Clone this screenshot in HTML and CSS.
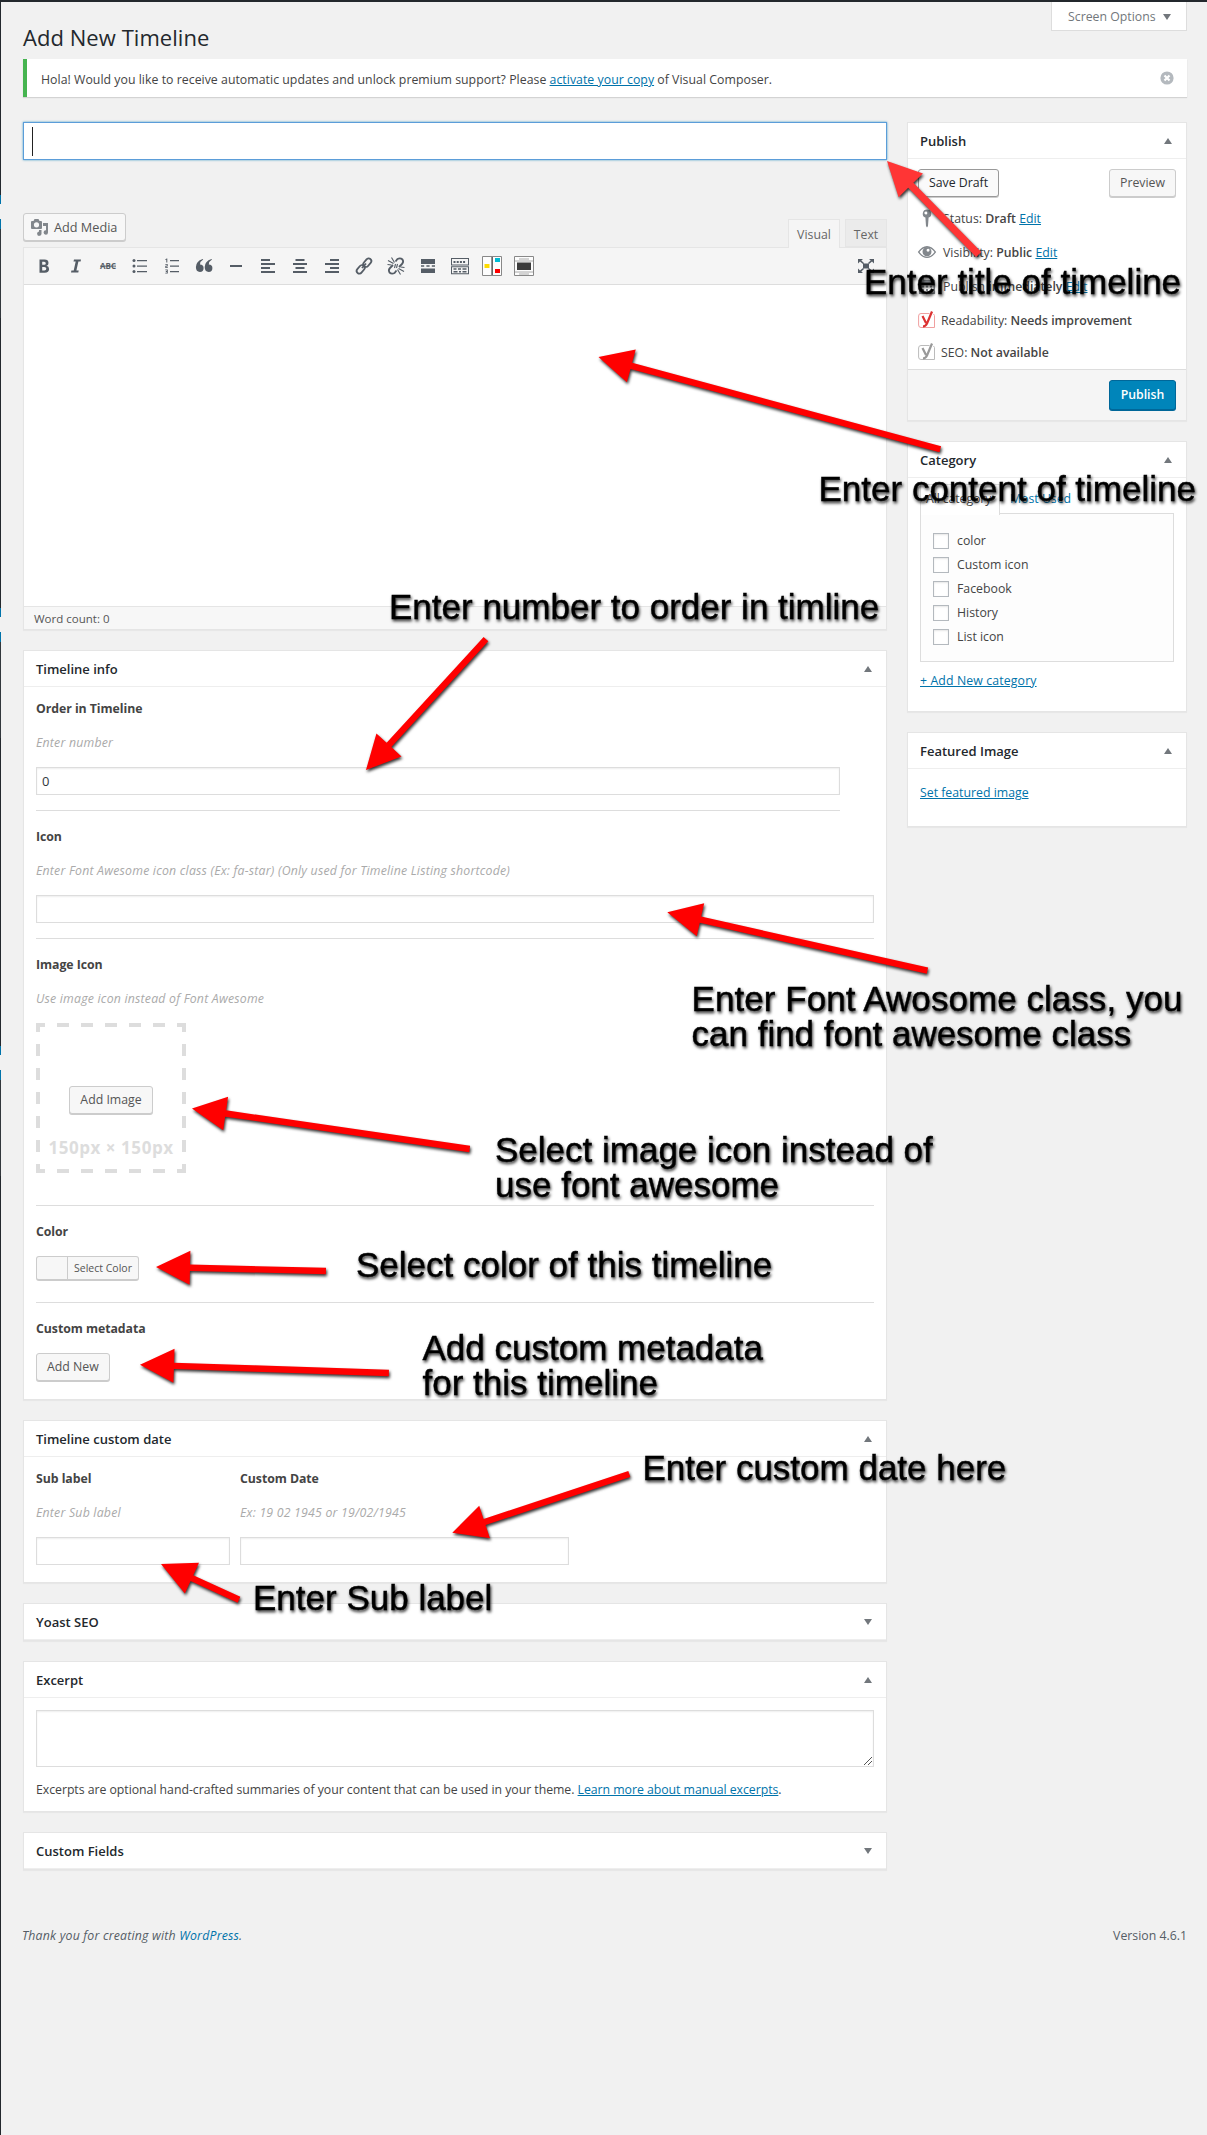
FILE: index.html
```html
<!DOCTYPE html>
<html lang="en">
<head>
<meta charset="utf-8">
<title>Add New Timeline</title>
<link rel="stylesheet" href="styles.css">
</head>
<body>
<div class="page">
  <header class="top">
    <h1>Add New Timeline</h1>
    <button class="screen-options">Screen Options <span class="tri down"></span></button>
  </header>

  <div class="notice">
    <p>Hola! Would you like to receive automatic updates and unlock premium support? Please <a href="#">activate your copy</a> of Visual Composer.</p>
    <svg class="dismiss" viewBox="0 0 14 14"><circle cx="7" cy="7" r="6.6" fill="#b4b9be"/><path d="M4.5 4.5l5 5M9.500 4.500l-5 5" stroke="#fff" stroke-width="2.200"/></svg>
  </div>

  <div class="columns">
    <main class="main">
      <div class="title-input"><i class="caret"></i></div>

      <div class="editor-tools">
        <button class="btn media">
          <svg viewBox="0 0 18 18" width="18" height="18" fill="#82878c"><path fill-rule="evenodd" d="M1 3h1.500L3.500 1h4l1 2H10q1 0 1 1v6q0 1-1 1H1q-1 0-1-1V4q0-1 1-1zm4.500 1.200a2.600 2.600 0 1 0 0 5.200 2.600 2.600 0 0 0 0-5.200z"/><path d="M12 5h5v9.500a2.200 2.200 0 1 1-2-2.200V8h-3zM8 12h2.500v3.500A2.200 2.200 0 1 1 8 13.500z"/></svg>
          <span>Add Media</span>
        </button>
        <div class="tabs"><span class="tab active">Visual</span><span class="tab">Text</span></div>
      </div>

      <section class="editor">
        <div class="toolbar">
          <svg viewBox="0 0 20 20"><path fill-rule="evenodd" d="M5.500 3.500h5q4 0 4 3.400 0 2.300-2 2.900 2.600.6 2.600 3.200 0 3.700-4.400 3.700H5.500zM8.200 5.700v3.100h2q1.600 0 1.600-1.600 0-1.500-1.700-1.500zm0 5.200v3.600h2.200q1.900 0 1.900-1.900 0-1.700-2-1.700z"/></svg>
          <svg viewBox="0 0 20 20"><path d="M8 3.500h7l-.4 2h-2.200l-2 9h2.300l-.4 2H5l.4-2h2.300l2-9H7.500z"/></svg>
          <svg viewBox="0 0 20 20"><text class="abc" x="2" y="13">ABC</text><path d="M2 9.600h16v1H2z"/></svg>
          <svg viewBox="0 0 20 20"><circle cx="4" cy="4.500" r="1.500"/><circle cx="4" cy="10" r="1.500"/><circle cx="4" cy="15.500" r="1.500"/><path d="M7 4h10v1.300H7zM7 9.400h10v1.300H7zM7 15h10v1.300H7z"/></svg>
          <svg viewBox="0 0 20 20"><path d="M8 4h9v1.300H8zM8 9.400h9v1.300H8zM8 15h9v1.300H8zM4.300 2.500h1v4h-1zM3.300 3.200h1v.8h-1zM3.300 8h2.400v2.400H4.300v.9h1.600v.8H3.300V9.700h1.500v-.9H3.300zM3.300 13.500h2.500v4H3.300v-.8h1.500v-.8h-1v-.8h1v-.8H3.300z"/></svg>
          <svg viewBox="0 0 20 20"><path d="M9.200 3.500Q6.300 5 6 8.600q3.600.2 3.600 3.500 0 3.900-3.700 3.900-4 0-4-4.900 0-5.800 6.800-8.100zM18 3.500q-2.900 1.500-3.200 5.100 3.600.2 3.600 3.500 0 3.900-3.700 3.900-4 0-4-4.900 0-5.800 6.800-8.100z"/></svg>
          <svg viewBox="0 0 20 20"><path d="M4 9h12v2H4z"/></svg>
          <svg viewBox="0 0 20 20"><path d="M3 3h9v2H3zM3 7h14v2H3zM3 11h9v2H3zM3 15h14v2H3z"/></svg>
          <svg viewBox="0 0 20 20"><path d="M5.500 3h9v2h-9zM3 7h14v2H3zM5.500 11h9v2h-9zM3 15h14v2H3z"/></svg>
          <svg viewBox="0 0 20 20"><path d="M8 3h9v2H8zM3 7h14v2H3zM8 11h9v2H8zM3 15h14v2H3z"/></svg>
          <svg viewBox="0 0 20 20" class="stroke"><rect x="-4.300" y="-2.700" width="9.500" height="5.400" rx="2.700" transform="translate(13 7) rotate(-50)"/><rect x="-5.200" y="-2.700" width="9.500" height="5.400" rx="2.700" transform="translate(7 13) rotate(-50)"/><path d="M8 12l4-4.500"/></svg>
          <svg viewBox="0 0 20 20" class="stroke"><path d="M9.500 5.500l2-2.500q2.800-1.500 5 .5 1.500 2.500-.5 4.500l-3 3M10.500 14.500l-2 2.500q-2.800 1.500-5-.5-1.500-2.500.5-4.500l3-3"/><path class="fine" d="M2 4.500l5.500 3M5.500 1.500l3 5M9.500 8l-1 4M1.500 8.500l4 .5M18 15.500l-5.500-3M14.500 18.500l-3-5M10.500 12l1-4M18.500 11.500l-4-.5"/></svg>
          <svg viewBox="0 0 20 20"><path d="M3 3h14v5H3zM3 9.300h3.200v1.500H3zM8.400 9.300h3.200v1.500H8.400zM13.800 9.300H17v1.500h-3.200zM3 12.500h14V17H3z"/></svg>
          <svg viewBox="0 0 20 20"><path fill-rule="evenodd" d="M1 2h18v7.500H1zm1 1v5.500h16V3zM1 10.300h18v8H1zm1 1v6h16v-6z"/><path d="M3.500 5h2v2h-2zM6.700 5h2v2h-2zM9.900 5h2v2h-2zM13.100 5h2v2h-2zM3.500 12.300h3v1.500h-3zM8 12.300h3v1.500H8zM12.500 12.300h4v1.500h-4zM3.500 15h4v1.500h-4zM9 15h2v1.500H9zM12.500 15h4v1.500h-4z"/></svg>
          <svg viewBox="0 0 20 20"><path d="M.5.500h19v19H.500z" fill="#fdfdfd" stroke="#888"/><path d="M9.300 1h1.700v18H9.300z" fill="#666"/><path d="M2.500 8h5v4h-5z" fill="#ffdc00"/><path d="M13 2h5v4h-5z" fill="#00bcd4"/><path d="M13 13h5v4h-5z" fill="#f00"/></svg>
          <svg viewBox="0 0 20 20"><path d="M.5.500h19v19H.500z" fill="#fdfdfd" stroke="#888"/><path d="M3 6.500h14v7.500H3z" fill="#3c3c3c"/><path d="M1 5h18M1 16h18M5 3h10M5 18h10" stroke="#aaa"/></svg>
          <svg viewBox="0 0 20 20" class="expand"><path d="M7 7.500h6v5H7zM2 3h5L5.300 4.500 8 7 7 8 4 5.500 2 7.500zM18 3h-5l1.700 1.500L12 7l1 1 3-2.500 2 2zM2 17h5l-1.700-1.500L8 13l-1-1-3 2.500-2-2zM18 17h-5l1.700-1.500L12 13l1-1 3 2.500 2-2z"/></svg>
        </div>
        <div class="canvas"></div>
        <div class="status">Word count: 0</div>
      </section>

      <section class="box">
        <h2>Timeline info <span class="tri up"></span></h2>
        <div class="body">
          <div class="field narrow"><b>Order in Timeline</b><em>Enter number</em><div class="input">0</div></div>
          <div class="field"><b>Icon</b><em>Enter Font Awesome icon class (Ex: fa-star) (Only used for Timeline Listing shortcode)</em><div class="input"></div></div>
          <div class="field image"><b>Image Icon</b><em>Use image icon instead of Font Awesome</em>
            <div class="drop">
              <svg class="dashes" viewBox="0 0 150 150"><path d="M0 0h9v4H4v5H0zM141 0h9v9h-4V4h-5zM0 141h4v5h5v4H0zM146 141h4v9h-9v-4h5z"/><path d="M21 2h112M21 148h112M2 21v112M148 21v112"/></svg>
              <button class="btn">Add Image</button><strong>150px × 150px</strong>
            </div>
          </div>
          <div class="field color"><b>Color</b><button class="picker"><i></i><span>Select Color</span></button></div>
          <div class="field last"><b>Custom metadata</b><button class="btn">Add New</button></div>
        </div>
      </section>

      <section class="box">
        <h2>Timeline custom date <span class="tri up"></span></h2>
        <div class="body dates">
          <div class="field sub"><b>Sub label</b><em>Enter Sub label</em><div class="input"></div></div>
          <div class="field date"><b>Custom Date</b><em>Ex: 19 02 1945 or 19/02/1945</em><div class="input"></div></div>
        </div>
      </section>

      <section class="box"><h2>Yoast SEO <span class="tri down"></span></h2></section>

      <section class="box">
        <h2>Excerpt <span class="tri up"></span></h2>
        <div class="body excerpt">
          <div class="textarea"><svg viewBox="0 0 8 8"><path d="M0 8L8 0M4 8l4-4" stroke="#555" stroke-width="1"/></svg></div>
          <p>Excerpts are optional hand-crafted summaries of your content that can be used in your theme. <a href="#">Learn more about manual excerpts</a>.</p>
        </div>
      </section>

      <section class="box"><h2>Custom Fields <span class="tri down"></span></h2></section>
    </main>

    <aside class="side">
      <section class="box publish">
        <h2>Publish <span class="tri up"></span></h2>
        <div class="draft"><button class="btn focus">Save Draft</button><button class="btn">Preview</button></div>
        <ul class="meta">
          <li><svg viewBox="0 0 20 20"><path fill-rule="evenodd" d="M10 1.500a4.200 4.200 0 0 1 1.600 8.100L11 18l-1 1.500L9 18l-.6-8.400A4.200 4.200 0 0 1 10 1.500zm-1.200 2a1.500 1.500 0 1 0 .1 3 1.500 1.500 0 0 0-.1-3z"/></svg><span>Status: <b>Draft</b> <a href="#">Edit</a></span></li>
          <li><svg viewBox="0 0 20 20"><path fill-rule="evenodd" d="M.8 10Q5 4 10 4t9.200 6Q15 16 10 16T.8 10zm1.700 0Q5.500 14.800 10 14.800T17.500 10Q14 5.800 10 5.800T2.500 10z"/><path fill-rule="evenodd" d="M10 5.200a4.500 4.500 0 1 1 0 9 4.500 4.500 0 0 1 0-9zm1 1.600a1.500 1.500 0 1 0 .1 3 1.500 1.500 0 0 0-.1-3z"/></svg><span>Visibility: <b>Public</b> <a href="#">Edit</a></span></li>
          <li><svg viewBox="0 0 20 20"><path fill-rule="evenodd" d="M2 4h3V2h2v2h6V2h2v2h3v14H2zm1.500 4v8.500h13V8z"/><path d="M5 9.500h2v2H5zM9 9.500h2v2H9zM13 9.500h2v2h-2zM5 13h2v2H5zM9 13h2v2H9z"/></svg><span>Publish <b>immediately</b> <a href="#">Edit</a></span></li>
          <li class="yoast bad"><svg viewBox="0 0 18 18"><path class="frame" d="M11.500 2.500H3Q.6 2.500.6 5v9q0 2.500 2.400 2.500h13.500v-12l-1-1.500"/><path class="y" d="M4.500 5l3.500 7M14 .5L9 12.500Q7.500 15.500 5 15.300"/></svg><span>Readability: <b>Needs improvement</b></span></li>
          <li class="yoast"><svg viewBox="0 0 18 18"><path class="frame" d="M11.500 2.500H3Q.6 2.500.6 5v9q0 2.500 2.400 2.500h13.500v-12l-1-1.500"/><path class="y" d="M4.500 5l3.500 7M14 .5L9 12.500Q7.500 15.500 5 15.300"/></svg><span>SEO: <b>Not available</b></span></li>
        </ul>
        <div class="actions"><button class="btn primary">Publish</button></div>
      </section>

      <section class="box category">
        <h2>Category <span class="tri up"></span></h2>
        <div class="cat-tabs"><span class="on">All category</span><a href="#">Most Used</a></div>
        <ul class="checks">
          <li><i></i>color</li><li><i></i>Custom icon</li><li><i></i>Facebook</li><li><i></i>History</li><li><i></i>List icon</li>
        </ul>
        <a class="add" href="#">+ Add New category</a>
      </section>

      <section class="box featured">
        <h2>Featured Image <span class="tri up"></span></h2>
        <a href="#">Set featured image</a>
      </section>
    </aside>
  </div>

  <footer><em>Thank you for creating with <a href="#">WordPress</a>.</em><span>Version 4.6.1</span></footer>
</div>

<svg class="notes" viewBox="0 0 1207 2135" width="1207" height="2135">
  <g fill="#f00">
    <path fill="#ff3535" transform="translate(887 161) rotate(45.600)" d="M0 0L34-17V-3.600H131V3.600H34V17z"/>
    <path transform="translate(598.500 357) rotate(15.100)" d="M0 0L34-17V-3.200H354V3.200H34V17z"/>
    <path transform="translate(366 770) rotate(-47.500)" d="M0 0L34-17V-3.200H177.600V3.200H34V17z"/>
    <path transform="translate(667.300 912.300) rotate(12.650)" d="M0 0L34-17V-3.200H266.600V3.200H34V17z"/>
    <path transform="translate(192 1108.600) rotate(8.270)" d="M0 0L34-17V-3.200H280.600V3.200H34V17z"/>
    <path transform="translate(156 1267) rotate(1.350)" d="M0 0L34-17V-3.200H170V3.200H34V17z"/>
    <path transform="translate(140 1364.700) rotate(1.900)" d="M0 0L34-17V-3.200H249V3.200H34V17z"/>
    <path transform="translate(452.300 1532.700) rotate(-18.350)" d="M0 0L34-17V-3.200H186.500V3.200H34V17z"/>
    <path transform="translate(161 1564) rotate(24.600)" d="M0 0L34-17V-3.200H85.800V3.200H34V17z"/>
  </g>
  <g class="note-text">
    <text x="864" y="294">Enter title of timeline</text>
    <text x="818.500" y="501">Enter content of timeline</text>
    <text x="389" y="619">Enter number to order in timline</text>
    <text x="691.500" y="1011" textLength="491">Enter Font Awosome class, you</text>
    <text x="691.500" y="1046">can find font awesome class</text>
    <text x="495" y="1162">Select image icon instead of</text>
    <text x="495" y="1197">use font awesome</text>
    <text x="356" y="1277">Select color of this timeline</text>
    <text x="422.500" y="1360">Add custom metadata</text>
    <text x="422.500" y="1395">for this timeline</text>
    <text x="642.500" y="1480">Enter custom date here</text>
    <text x="253" y="1610">Enter Sub label</text>
  </g>
</svg>
</body>
</html>
```
FILE: styles.css
```css
* { box-sizing: border-box; }
body {
  margin: 0;
  position: relative;
  background: #f1f1f1;
  color: #444;
  font: 12.3px/18px "Open Sans", "Noto Sans", sans-serif;
}
h1, h2, p, ul { margin: 0; padding: 0; font-weight: 400; list-style: none; }
a { color: #0073aa; }
button { font: inherit; color: #555; margin: 0; }

.page {
  height: 2135px;
  padding: 0 20px 0 22px;
  border-top: 2px solid #23282d;
  border-left: 1px solid;
  border-image: linear-gradient(#23282d 195px, #0073aa 195px 204px, #f1f1f1 204px 219px, #0073aa 219px 229px, #32373c 229px 318px, #23282d 318px 608px, #0073aa 608px 617px, #f1f1f1 617px 632px, #0073aa 632px 642px, #32373c 642px 738px, #23282d 738px 1046px, #0073aa 1046px 1055px, #f1f1f1 1055px 1070px, #0073aa 1070px 1080px, #32373c 1080px 1176px, #23282d 1176px) 2 0 0 1;
}

.tri { width: 0; height: 0; border: 4px solid transparent; flex: none; }
.tri.up { border-bottom: 6px solid #72777c; border-top: 0; }
.tri.down { border-top: 6px solid #72777c; border-bottom: 0; }

.top { display: flex; justify-content: space-between; height: 57px; }
h1 { font-size: 22px; line-height: 30px; padding-top: 20px; color: #23282d; letter-spacing: .05px; }
.screen-options {
  width: 136px; height: 29px; padding: 1px 16px 0; display: flex; align-items: center; gap: 7px;
  background: #fff; border: 1px solid #ddd; border-top: 0; color: #72777c; white-space: nowrap;
}

.notice {
  height: 38px; padding: 2px 13px 0 14px; display: flex; align-items: center; justify-content: space-between;
  background: #fff; border-left: 4px solid #46b450; box-shadow: 0 1px 1px rgba(0,0,0,.12);
  letter-spacing: .03px;
}
.notice p { padding-top: 2px; }
.dismiss { width: 14px; height: 14px; margin-top: -2px; }

.columns { display: flex; justify-content: space-between; margin-top: 25px; height: 1749px; }
.main { width: 864px; }
.side { width: 280px; }

.title-input {
  height: 38px; padding: 4px 8px; background: #fff;
  border: 1px solid #5b9dd9; box-shadow: 0 0 2px rgba(30,140,190,.8);
}
.caret { display: block; width: 1px; height: 29px; background: #222; }

.btn {
  height: 28px; padding: 0 10px; background: #f7f7f7; white-space: nowrap;
  border: 1px solid #ccc; border-radius: 3px; box-shadow: 0 1px 0 #ccc; line-height: 26px;
}
.btn.focus { border-color: #999; color: #23282d; background: #fafafa; }
.btn.primary {
  width: 67px; height: 30px; background: #0085ba; color: #fff; font-weight: 600;
  border-color: #006799; box-shadow: 0 1px 0 #006799; padding: 0;
}

.editor-tools { display: flex; justify-content: space-between; align-items: flex-end; height: 87px; }
.media { width: 103px; margin-bottom: 6px; padding: 0 7px; display: flex; align-items: center; gap: 5px; font-size: 12.700px; }
.tabs { display: flex; gap: 5px; margin-bottom: -1px; }
.tab {
  height: 28px; width: 42px; line-height: 29px; text-align: center;
  background: #ebebeb; border: 1px solid #e5e5e5; color: #666;
}
.tab.active { width: 52px; height: 29px; background: #f5f5f5; border-bottom: 0; }

.editor { border: 1px solid #e5e5e5; box-shadow: 0 1px 1px rgba(0,0,0,.04); height: 383px; margin-bottom: 20px; }
.toolbar {
  height: 37px; padding-left: 10px; display: flex; align-items: center; gap: 12px;
  background: #f5f5f5; border-bottom: 1px solid #ddd; fill: #555d66;
}
.toolbar svg { width: 20px; height: 20px; flex: none; }
.toolbar .expand { margin-left: auto; margin-right: 10px; }
.stroke { fill: none; stroke: #555d66; stroke-width: 1.8; }
.stroke .fine { stroke-width: 1.1; }
.abc { font: 700 8px "Open Sans", sans-serif; }
.canvas { height: 321px; background: #fff; }
.status { height: 23px; padding-left: 10px; background: #f7f7f7; border-top: 1px solid #e5e5e5; font-size: 11.5px; line-height: 23px; color: #555; }

.box { background: #fff; border: 1px solid #e5e5e5; box-shadow: 0 1px 1px rgba(0,0,0,.04); margin-bottom: 20px; }
.box h2 {
  height: 36px; padding: 1px 14px 0 12px; display: flex; align-items: center; justify-content: space-between;
  font-size: 13px; font-weight: 600; color: #23282d; border-bottom: 1px solid #eee;
}

.body { padding: 0 12px; }
.field { padding: 16px 0 15px; border-bottom: 1px solid #ddd; display: flex; flex-direction: column; align-items: flex-start; gap: 16px; }
.field:first-child, .dates .field { padding-top: 12px; }
.field b, .field em { height: 18px; line-height: 20px; }
.field b { font-weight: 700; letter-spacing: -.05px; }
.field em { color: #aaa; letter-spacing: .21px; }
.narrow { width: 804px; }
.input { width: 100%; height: 28px; padding: 0 5px; border: 1px solid #ddd; background: #fff; box-shadow: inset 0 1px 2px rgba(0,0,0,.07); line-height: 27px; font-size: 13px; color: #32373c; }
.image { padding-bottom: 32px; }
.drop { width: 150px; height: 150px; padding-top: 63px; display: flex; flex-direction: column; align-items: center; position: relative; }
.dashes { position: absolute; inset: 0; fill: #ddd; stroke: #ddd; stroke-width: 0; }
.dashes path + path { fill: none; stroke-width: 4; stroke-dasharray: 12 12; }
.drop strong { margin-top: 21px; font-size: 17px; line-height: 26px; letter-spacing: .55px; color: #ddd; white-space: nowrap; }
.color { padding-bottom: 21px; }
.picker { display: flex; width: 103px; height: 25px; padding: 0; border: 1px solid #ccc; border-bottom-width: 2px; border-radius: 3px; background: #f7f7f7; font-size: 10.500px; line-height: 22px; }
.picker i { width: 31px; border-right: 1px solid #ccc; }
.picker span { flex: 1; text-align: center; white-space: nowrap; }
.last { border: 0; padding-bottom: 18px; }

.dates { display: flex; gap: 10px; }
.dates .field { border: 0; padding-bottom: 17px; }
.sub { width: 194px; }
.date { width: 329px; }
.excerpt { padding: 12px; }
.excerpt p { letter-spacing: -.04px; }
.textarea { height: 57px; border: 1px solid #ddd; box-shadow: inset 0 1px 2px rgba(0,0,0,.07); display: flex; align-items: flex-end; justify-content: flex-end; padding: 1px; margin-bottom: 14px; }
.textarea svg { width: 8px; height: 8px; }

.draft { display: flex; justify-content: space-between; padding: 10px 10px 0; height: 48px; }
.meta { height: 162px; padding-left: 9px; }
.meta li { height: 34px; display: flex; align-items: flex-start; gap: 6px; padding-top: 3px; }
.meta b { font-weight: 600; }
.meta svg { width: 20px; height: 20px; fill: #82878c; margin-top: -2px; }
.meta .yoast { gap: 5px; height: 32px; padding-left: 1px; }
.meta .yoast svg { width: 18px; height: 18px; fill: none; stroke: #999; margin-top: -1px; }
.yoast .frame { stroke: #bbb; stroke-width: 1; }
.yoast .y { stroke-width: 2.200; }
.meta .bad svg { stroke: #dc3232; }
.bad .frame { stroke: #f0a0a0; }
.actions { height: 51px; padding: 10px; display: flex; justify-content: flex-end; background: #f5f5f5; border-top: 1px solid #ddd; }
.publish { height: 299px; }

.category { height: 271px; }
.cat-tabs { display: flex; height: 36px; padding: 6px 12px 0; }
.cat-tabs .on { width: 80px; height: 31px; padding: 5px 0 0 5px; border: 1px solid #ddd; border-bottom: 0; background: #fff; white-space: nowrap; letter-spacing: -.1px; }
.cat-tabs a { padding: 6px 0 0 10px; text-decoration: none; }
.checks {
  height: 149px; margin: -1px 12px 0; padding: 15px 12px; border: 1px solid #ddd;
  background: linear-gradient(#fff, #fff) 0 0 / 78px 1px no-repeat border-box, #fdfdfd;
}
.checks li { height: 24px; display: flex; align-items: center; gap: 8px; }
.checks i { width: 16px; height: 16px; border: 1px solid #b4b9be; background: #fff; box-shadow: inset 0 1px 2px rgba(0,0,0,.1); }
.add { display: block; margin: 10px 12px; letter-spacing: .12px; }
.featured { height: 95px; }
.featured a { display: block; margin: 15px 12px; }

footer { display: flex; justify-content: space-between; margin-left: -1px; padding-top: 56px; color: #555d66; }
footer em { letter-spacing: .2px; }
footer a { text-decoration: none; }

/* Callouts laid over the screen */
.notes { position: absolute; left: 0; top: 0; z-index: 2; pointer-events: none; filter: drop-shadow(1px 2px 1.500px rgba(0,0,0,.8)); }
.note-text { font: 35px "Liberation Sans", Arial, sans-serif; fill: #000; stroke: #000; stroke-width: .4; }
```
